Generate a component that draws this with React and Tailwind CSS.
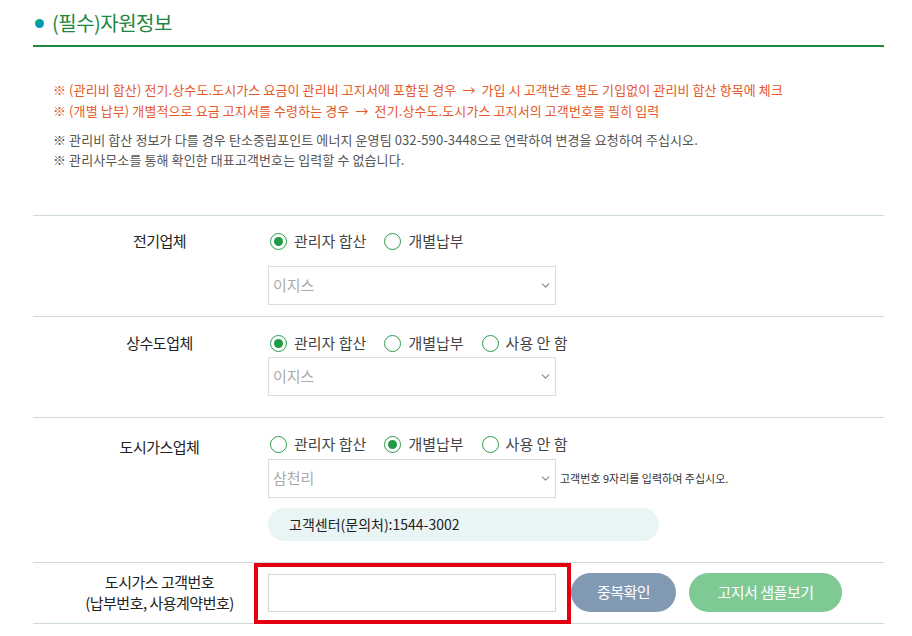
import { ChevronDown } from 'lucide-react'

const FONT = { fontFamily: '"Noto Sans CJK KR", "Noto Sans", sans-serif' }

function Radio({ label, checked }) {
  return (
    <label className="flex items-center gap-[7px] text-[15px] text-[#444] tracking-[0px]">
      <span className="w-[17px] h-[17px] rounded-full border border-[#2b9a4d] flex items-center justify-center bg-white">
        {checked && <span className="w-[9px] h-[9px] rounded-full bg-[#1f9a45]" />}
      </span>
      {label}
    </label>
  )
}

function Select({ value }) {
  return (
    <div className="w-[288px] h-[39px] border border-[#dcdcdc] bg-white flex items-center justify-between pl-[4px] pr-[3px]">
      <span className="text-[15px] text-[#aaa]">{value}</span>
      <ChevronDown className="w-[13px] h-[13px] text-[#888]" strokeWidth={2} />
    </div>
  )
}

function Row({ label, children, className = '' }) {
  return (
    <div className={`flex border-b border-[#cddadd] ${className}`}>
      <div className="w-[235px] pl-[18px] text-center text-[15px] text-[#222] tracking-[-0.5px]">{label}</div>
      <div className="flex-1">{children}</div>
    </div>
  )
}

export default function App() {
  return (
    <div className="w-[912px] h-[636px] bg-white relative overflow-hidden" style={FONT}>
      <div className="ml-[33px] w-[851px]">
        {/* Title */}
        <div className="flex items-center gap-[8px] pt-[9px] pb-[8px] pl-[2px] border-b-2 border-[#1f8a3f]">
          <span className="w-[9px] h-[9px] rounded-full bg-gradient-to-br from-[#1fb35a] to-[#1c7fe0]" />
          <h2 className="text-[20px] text-[#1e8740] tracking-[-0.5px] leading-[28px]">(필수)자원정보</h2>
        </div>

        {/* Notes */}
        <div className="pl-[20px] pt-[32px] text-[13px] tracking-[0.1px]">
          <p className="text-[#e6582b] leading-[21px]">※ (관리비 합산) 전기.상수도.도시가스 요금이 관리비 고지서에 포함된 경우 &nbsp;→ &nbsp;가입 시 고객번호 별도 기입없이 관리비 합산 항목에 체크</p>
          <p className="text-[#e6582b] leading-[21px]">※ (개별 납부) 개별적으로 요금 고지서를 수령하는 경우 &nbsp;→ &nbsp;전기.상수도.도시가스 고지서의 고객번호를 필히 입력</p>
          <p className="text-[#555] leading-[20px] mt-[9px]">※ 관리비 합산 정보가 다를 경우 탄소중립포인트 에너지 운영팀 032-590-3448으로 연락하여 변경을 요청하여 주십시오.</p>
          <p className="text-[#555] leading-[20px]">※ 관리사무소를 통해 확인한 대표고객번호는 입력할 수 없습니다.</p>
        </div>

        {/* Form */}
        <div className="mt-[45px] border-t border-[#cddadd]">
          <Row label={<div className="leading-[24px] pt-[13px]">전기업체</div>} className="h-[101px]">
            <div className="pt-[13px] flex gap-[18px] h-[37px] pl-[2px]">
              <Radio label="관리자 합산" checked />
              <Radio label="개별납부" />
            </div>
            <div className="mt-[13px]"><Select value="이지스" /></div>
          </Row>

          <Row label={<div className="leading-[24px] pt-[14px]">상수도업체</div>} className="h-[101px]">
            <div className="pt-[12px] flex gap-[18px] h-[40px] pl-[2px]">
              <Radio label="관리자 합산" checked />
              <Radio label="개별납부" />
              <Radio label="사용 안 함" />
            </div>
            <div><Select value="이지스" /></div>
          </Row>

          <Row label={<div className="leading-[24px] pt-[17px]">도시가스업체</div>} className="h-[145px]">
            <div className="pt-[12px] flex gap-[18px] h-[41px] pl-[2px]">
              <Radio label="관리자 합산" />
              <Radio label="개별납부" checked />
              <Radio label="사용 안 함" />
            </div>
            <div className="flex items-center gap-[4px]">
              <Select value="삼천리" />
              <span className="text-[11px] text-[#333] tracking-[0px]">고객번호 9자리를 입력하여 주십시오.</span>
            </div>
            <div className="mt-[10px] w-[391px] h-[33px] rounded-full bg-[#e9f4f4] flex items-center pl-[21px] text-[14px] text-[#222] tracking-[0px]">
              고객센터(문의처):1544-3002
            </div>
          </Row>

          <Row label={<div className="leading-[21px] pt-[8px]">도시가스 고객번호<br />(납부번호, 사용계약번호)</div>} className="h-[61px]">
            <div className="pt-[10px] flex items-center">
              <div className="w-[288px] h-[38px] border border-[#d6d6d6] bg-white" />
              <button className="ml-[15px] w-[105px] h-[39px] rounded-full bg-[#8299b4] text-white text-[15px] tracking-[-0.5px]">중복확인</button>
              <button className="ml-[13px] w-[153px] h-[39px] rounded-full bg-[#7fc995] text-white text-[15px] tracking-[-0.5px]">고지서 샘플보기</button>
            </div>
          </Row>
        </div>
      </div>

      {/* annotation highlight */}
      <div className="absolute left-[254px] top-[563px] w-[317px] h-[61px] border-4 border-[#e3000f]" />
    </div>
  )
}
